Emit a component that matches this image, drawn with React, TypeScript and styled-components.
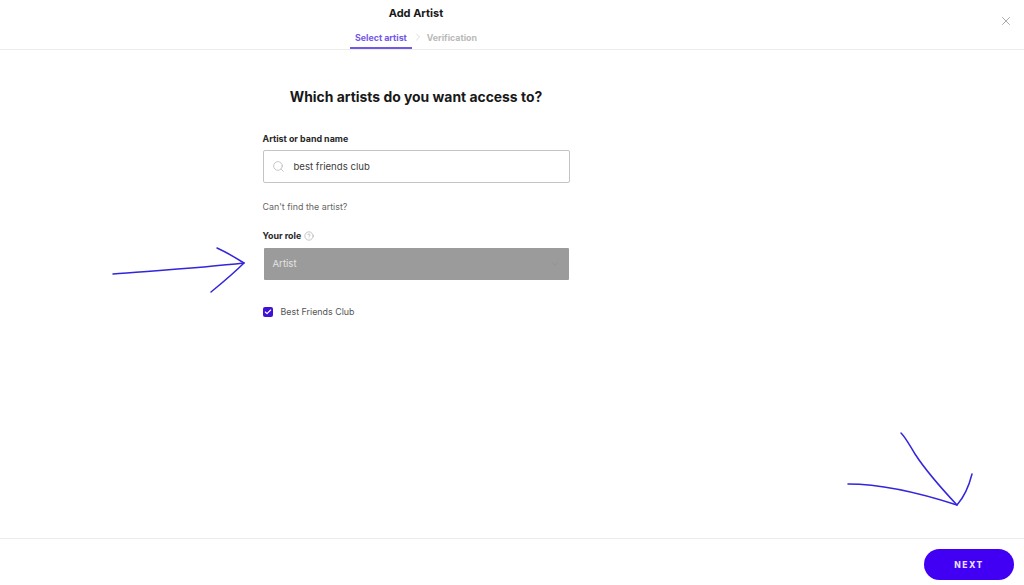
import React from 'react';
import styled, { createGlobalStyle } from 'styled-components';
import { Search, X, ChevronRight, Check, CircleHelp, ChevronDown } from 'lucide-react';

const GlobalStyle = createGlobalStyle`
  html, body { margin: 0; padding: 0; background: #fff; }
  body { font-family: "Inter", "Liberation Sans", sans-serif; }
  #root { height: 585px; overflow: hidden; }
`;

const Page = styled.div`
  position: relative;
  width: 1024px;
  height: 585px;
  display: flex;
  flex-direction: column;
  background: #fff;
  color: #181818;
`;

const Header = styled.header`
  position: relative;
  height: 50px;
  flex: none;
  box-sizing: border-box;
  border-bottom: 1px solid #ececec;
  padding-right: 192px;
  display: flex;
  flex-direction: column;
  align-items: center;
`;

const Title = styled.div`
  font-size: 11px;
  font-weight: 700;
  line-height: 14px;
  margin-top: 6px;
`;

const Tabs = styled.div`
  display: flex;
  align-items: center;
  margin-top: 9px;
  height: 21px;
`;

const Tab = styled.div<{ $active?: boolean }>`
  font-size: 8.8px;
  font-weight: 700;
  line-height: 12px;
  height: 20px;
  box-sizing: border-box;
  padding: 3px 5px 0;
  color: ${p => (p.$active ? '#7358e6' : '#b9b9b9')};
  border-bottom: ${p => (p.$active ? '2px solid #7358e6' : '2px solid transparent')};
`;

const TabArrow = styled(ChevronRight)`
  width: 12px;
  height: 12px;
  color: #c9c9c9;
  margin: -4px -2px 0 0;
`;

const CloseButton = styled.button`
  position: absolute;
  top: 14px;
  right: 11px;
  width: 14px;
  height: 14px;
  padding: 0;
  border: 0;
  background: none;
  color: #8f8f8f;
  display: flex;
`;

const Main = styled.main`
  flex: 1;
  padding-right: 192px;
  display: flex;
  flex-direction: column;
  align-items: center;
`;

const Heading = styled.h1`
  margin: 38px 0 0;
  font-size: 13.9px;
  font-weight: 700;
  line-height: 18px;
  color: #181818;
`;

const Form = styled.div`
  width: 307px;
  margin-top: 27px;
  display: flex;
  flex-direction: column;
`;

const Label = styled.label`
  display: flex;
  align-items: center;
  gap: 3px;
  font-size: 8.9px;
  font-weight: 700;
  line-height: 12px;
  color: #282828;
`;

const SearchBox = styled.div`
  margin-top: 5px;
  height: 33px;
  box-sizing: border-box;
  border: 1px solid #c4c4c4;
  border-radius: 2px;
  display: flex;
  align-items: center;
  padding-left: 8px;
  gap: 9px;
  font-size: 9.6px;
  color: #3c3c3c;
`;

const HelpLink = styled.div`
  margin-top: 18px;
  font-size: 8.9px;
  line-height: 12px;
  color: #666;
`;

const RoleLabel = styled(Label)`
  margin-top: 17px;
`;

const RoleSelect = styled.div`
  margin: 6px 1px 0;
  height: 32px;
  box-sizing: border-box;
  background: #9b9b9b;
  border-radius: 1px;
  display: flex;
  align-items: center;
  justify-content: space-between;
  padding: 0 9px 1px;
  font-size: 9.6px;
  color: #e4e4e4;
`;

const CheckRow = styled.div`
  margin-top: 26px;
  display: flex;
  align-items: center;
  gap: 8px;
  font-size: 8.9px;
  line-height: 12px;
  color: #555;
`;

const CheckBox = styled.span`
  width: 10px;
  height: 10px;
  border-radius: 2px;
  background: #3f10d6;
  display: flex;
  align-items: center;
  justify-content: center;
  color: #fff;
`;

const Footer = styled.footer`
  height: 47px;
  flex: none;
  box-sizing: border-box;
  border-top: 1px solid #ececec;
  display: flex;
  justify-content: flex-end;
  padding: 10px 10px 0 0;
`;

const NextButton = styled.button`
  width: 90px;
  height: 31px;
  border: 0;
  border-radius: 16px;
  background: #4100f4;
  color: #e8ddff;
  font-family: inherit;
  font-size: 8.5px;
  font-weight: 800;
  letter-spacing: 1.5px;
`;

const Annotations = styled.svg`
  position: absolute;
  inset: 0;
  pointer-events: none;
`;

const Ink = styled.path`
  fill: none;
  stroke: #3325dc;
  stroke-width: 1.5;
  stroke-linecap: round;
  stroke-linejoin: round;
`;

export default function App() {
  return (
    <Page>
      <GlobalStyle />
      <Header>
        <Title>Add Artist</Title>
        <Tabs>
          <Tab $active>Select artist</Tab>
          <TabArrow strokeWidth={1.3} />
          <Tab>Verification</Tab>
        </Tabs>
        <CloseButton aria-label="Close">
          <X size={14} strokeWidth={1.3} />
        </CloseButton>
      </Header>
      <Main>
        <Heading>Which artists do you want access to?</Heading>
        <Form>
          <Label>Artist or band name</Label>
          <SearchBox>
            <Search size={13} strokeWidth={1} color="#9a9a9a" />
            best friends club
          </SearchBox>
          <HelpLink>Can't find the artist?</HelpLink>
          <RoleLabel>
            Your role
            <CircleHelp size={10} strokeWidth={1} color="#777" />
          </RoleLabel>
          <RoleSelect>
            Artist
            <ChevronDown size={10} strokeWidth={1.5} color="#8f8f8f" />
          </RoleSelect>
          <CheckRow>
            <CheckBox>
              <Check size={8} strokeWidth={3.5} />
            </CheckBox>
            Best Friends Club
          </CheckRow>
        </Form>
      </Main>
      <Footer>
        <NextButton>NEXT</NextButton>
      </Footer>
      <Annotations width="1024" height="585" viewBox="0 0 1024 585">
        <Ink d="M113 274 C150 271 200 268 244 263" />
        <Ink d="M217 248 C226 252 236 258 244 263 C234 273 222 283 211 292" />
        <Ink d="M848 484 C880 484 920 493 957 505" />
        <Ink d="M901 433 C906 438 910 446 915 454 C928 474 942 489 957 505 C964 497 969 486 972 474" />
      </Annotations>
    </Page>
  );
}
